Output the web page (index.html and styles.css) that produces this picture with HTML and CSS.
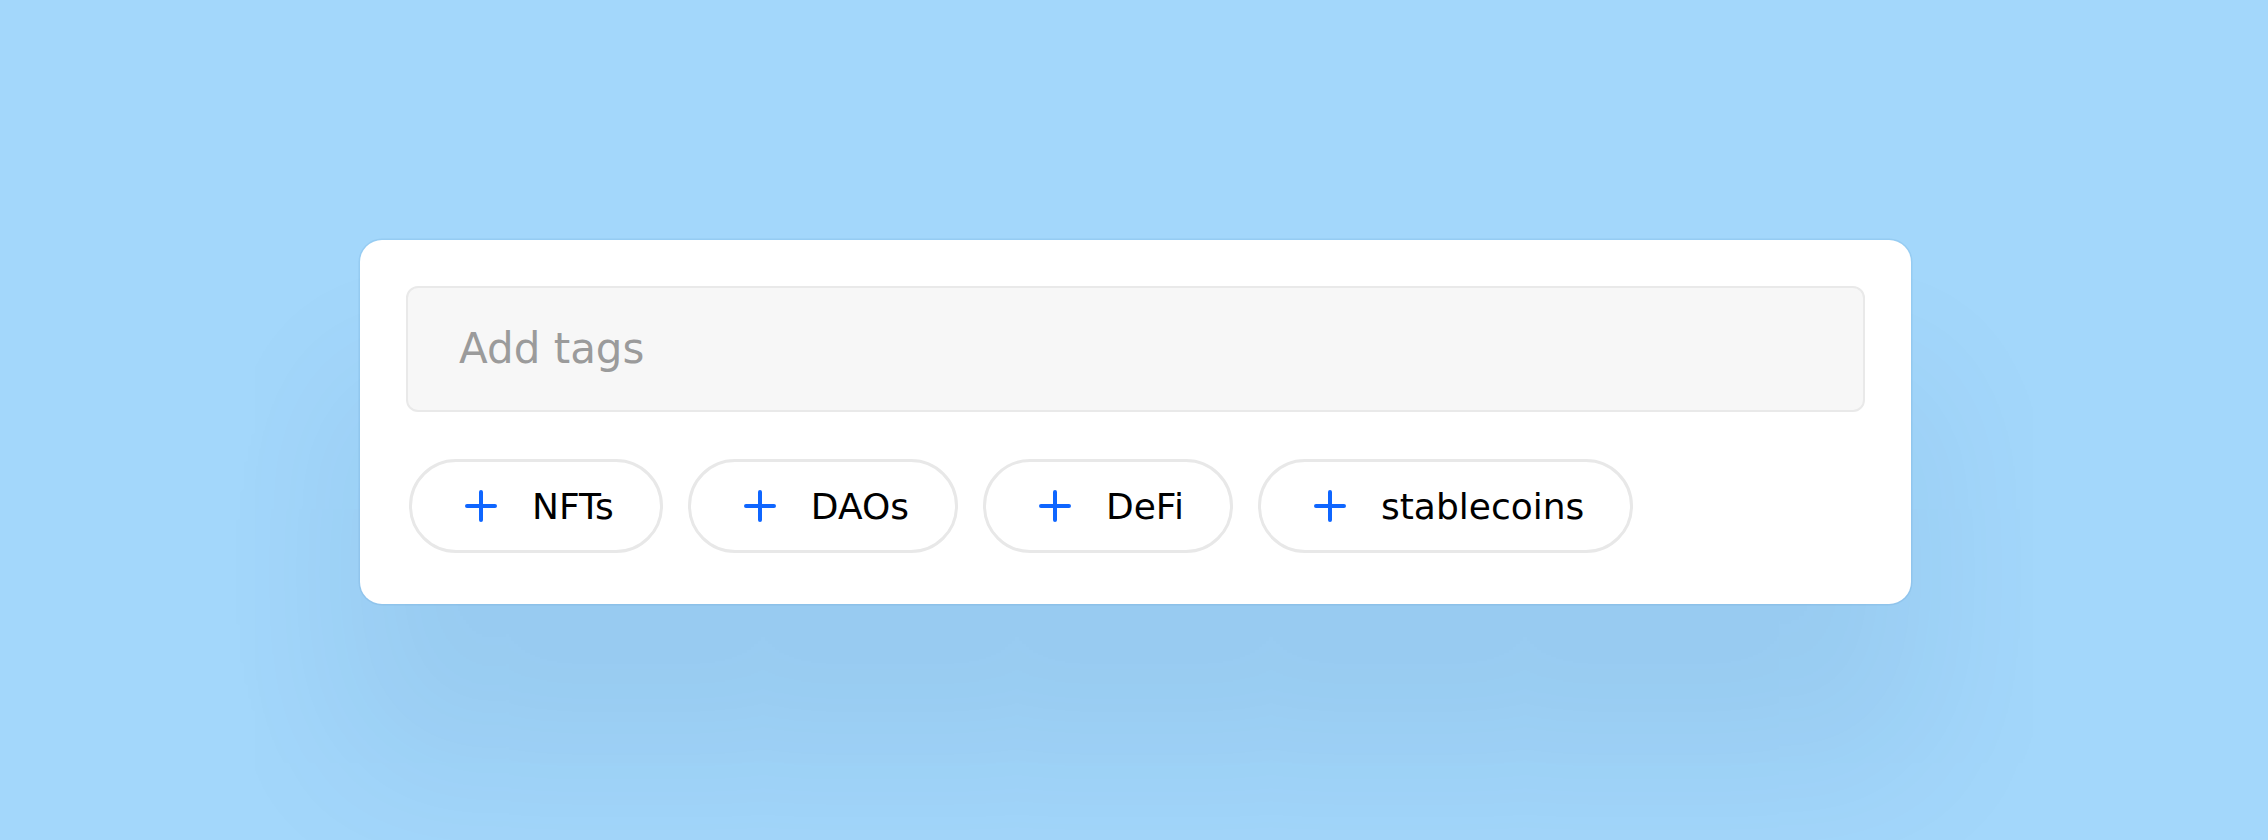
FILE: index.html
```html
<!DOCTYPE html>
<html lang="en">
<head>
<meta charset="utf-8">
<title>Add tags</title>
<link rel="stylesheet" href="styles.css">
</head>
<body>
<main class="page">
  <section class="card">
    <div class="tag-input"><span class="placeholder">Add tags</span></div>
    <div class="chips">
      <button class="chip"><svg class="plus" viewBox="0 0 32 32"><path d="M16 2v28M2 16h28"/></svg><span>NFTs</span></button>
      <button class="chip"><svg class="plus" viewBox="0 0 32 32"><path d="M16 2v28M2 16h28"/></svg><span>DAOs</span></button>
      <button class="chip"><svg class="plus" viewBox="0 0 32 32"><path d="M16 2v28M2 16h28"/></svg><span>DeFi</span></button>
      <button class="chip"><svg class="plus" viewBox="0 0 32 32"><path d="M16 2v28M2 16h28"/></svg><span>stablecoins</span></button>
    </div>
  </section>
</main>
</body>
</html>
```
FILE: styles.css
```css
html, body {
  margin: 0;
  padding: 0;
}
body {
  background: #a3d7fb;
  font-family: "DejaVu Sans", "Noto Sans", sans-serif;
  overflow: hidden;
}
.page {
  height: 840px;
  display: flex;
  align-items: center;
  justify-content: center;
  padding: 4px 0 0 3px;
  box-sizing: border-box;
}
.card {
  width: 1551px;
  height: 364px;
  box-sizing: border-box;
  padding: 46px;
  background: #fff;
  border-radius: 22px;
  box-shadow: 0 0 0 1.5px rgba(40, 110, 170, 0.10), 0 150px 160px 10px rgba(20, 70, 120, 0.08);
  display: flex;
  flex-direction: column;
  gap: 47px;
}
.tag-input {
  height: 126px;
  box-sizing: border-box;
  border: 2px solid #e9e9e9;
  border-radius: 12px;
  background: #f7f7f7;
  display: flex;
  align-items: center;
  padding-left: 51px;
}
.placeholder {
  font-size: 42px;
  color: #9b9b9b;
  line-height: 1;
}
.chips {
  display: flex;
  gap: 25px;
  padding-left: 3px;
}
.chip {
  height: 94px;
  box-sizing: border-box;
  border: 3px solid #e8e8e8;
  border-radius: 47px;
  background: #fff;
  display: flex;
  align-items: center;
  gap: 35px;
  padding: 0 46px 0 53px;
  font-family: inherit;
  font-size: 36px;
  color: #000;
  cursor: pointer;
}
.chip span {
  line-height: 1;
  position: relative;
  top: 1px;
}
.plus {
  width: 32px;
  height: 32px;
  flex: none;
  fill: none;
  stroke: #0f66ff;
  stroke-width: 4;
  stroke-linecap: round;
}
```
